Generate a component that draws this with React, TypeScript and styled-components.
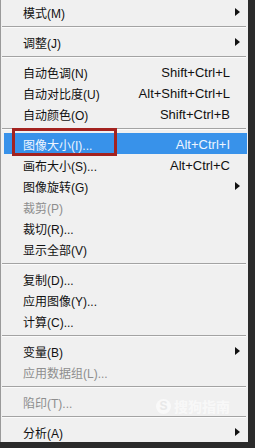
import React from "react";
import styled, { createGlobalStyle } from "styled-components";

const GlobalStyle = createGlobalStyle`
  html, body {
    margin: 0;
    padding: 0;
    background: #2b2b2b;
  }
`;

const Page = styled.div`
  width: 255px;
  height: 448px;
  background: #2b2b2b;
  display: flex;
  align-items: flex-start;
  overflow: hidden;
`;

const Menu = styled.div`
  position: relative;
  width: 248px;
  box-sizing: border-box;
  background: #f0f0f0;
  border-left: 1px solid #9a9a9a;
  padding-top: 1px;
  display: flex;
  flex-direction: column;
  font-family: "Liberation Sans", "Noto Sans CJK SC", sans-serif;
`;

const Item = styled.div<{ $active?: boolean; $disabled?: boolean }>`
  position: relative;
  height: 21px;
  margin: 0 1px 0 3px;
  padding-left: 19px;
  display: flex;
  align-items: center;
  background: ${({ $active }) => ($active ? "#3892ea" : "transparent")};
  color: ${({ $active, $disabled }) =>
    $active ? "#eef5ff" : $disabled ? "#8e8e8e" : "#111"};
`;

const Label = styled.span`
  flex: 1;
  font-size: 12px;
  padding-top: 2px;
  white-space: nowrap;
`;

const Shortcut = styled.span`
  font-size: 13px;
  padding-top: 1px;
  white-space: nowrap;
`;

const ArrowSlot = styled.span`
  width: 17px;
  display: flex;
  align-items: center;
  padding-left: 5px;
  box-sizing: border-box;
`;

const Arrow = styled.span`
  width: 0;
  height: 0;
  border-top: 4px solid transparent;
  border-bottom: 4px solid transparent;
  border-left: 5px solid #111;
`;

const Separator = styled.div`
  height: 9px;
  box-sizing: border-box;
  padding: 4px 2px 0 1px;

  &::after {
    content: "";
    display: block;
    border-top: 1px solid #a3a3a3;
    border-bottom: 1px solid #fbfbfb;
  }
`;

const Callout = styled.div`
  position: absolute;
  left: 8px;
  top: -5px;
  width: 105px;
  height: 28px;
  box-sizing: border-box;
  border: 3px solid #a3221f;
  pointer-events: none;
`;

const Watermark = styled.div`
  position: absolute;
  left: 155px;
  top: 396px;
  display: flex;
  align-items: center;
  gap: 3px;
  color: rgba(255, 255, 255, 0.6);
  font-size: 14px;
  font-weight: bold;
  pointer-events: none;
`;

const WatermarkBadge = styled.span`
  width: 15px;
  height: 15px;
  border-radius: 50%;
  background: rgba(255, 255, 255, 0.6);
  color: #e8e8e8;
  font-size: 12px;
  display: flex;
  align-items: center;
  justify-content: center;
`;

type Entry =
  | { sep: true }
  | {
      sep?: false;
      label: string;
      shortcut?: string;
      sub?: boolean;
      disabled?: boolean;
      active?: boolean;
    };

const entries: Entry[] = [
  { label: "模式(M)", sub: true },
  { sep: true },
  { label: "调整(J)", sub: true },
  { sep: true },
  { label: "自动色调(N)", shortcut: "Shift+Ctrl+L" },
  { label: "自动对比度(U)", shortcut: "Alt+Shift+Ctrl+L" },
  { label: "自动颜色(O)", shortcut: "Shift+Ctrl+B" },
  { sep: true },
  { label: "图像大小(I)...", shortcut: "Alt+Ctrl+I", active: true },
  { label: "画布大小(S)...", shortcut: "Alt+Ctrl+C" },
  { label: "图像旋转(G)", sub: true },
  { label: "裁剪(P)", disabled: true },
  { label: "裁切(R)..." },
  { label: "显示全部(V)" },
  { sep: true },
  { label: "复制(D)..." },
  { label: "应用图像(Y)..." },
  { label: "计算(C)..." },
  { sep: true },
  { label: "变量(B)", sub: true },
  { label: "应用数据组(L)...", disabled: true },
  { sep: true },
  { label: "陷印(T)...", disabled: true },
  { sep: true },
  { label: "分析(A)", sub: true },
];

export default function App() {
  return (
    <>
      <GlobalStyle />
      <Page>
        <Menu>
          {entries.map((e, i) =>
            e.sep ? (
              <Separator key={i} />
            ) : (
              <Item key={i} $active={e.active} $disabled={e.disabled}>
                <Label>{e.label}</Label>
                {e.shortcut && <Shortcut>{e.shortcut}</Shortcut>}
                <ArrowSlot>{e.sub && <Arrow />}</ArrowSlot>
                {e.active && <Callout />}
              </Item>
            )
          )}
          <Watermark>
            <WatermarkBadge>S</WatermarkBadge>
            搜狗指南
          </Watermark>
        </Menu>
      </Page>
    </>
  );
}
